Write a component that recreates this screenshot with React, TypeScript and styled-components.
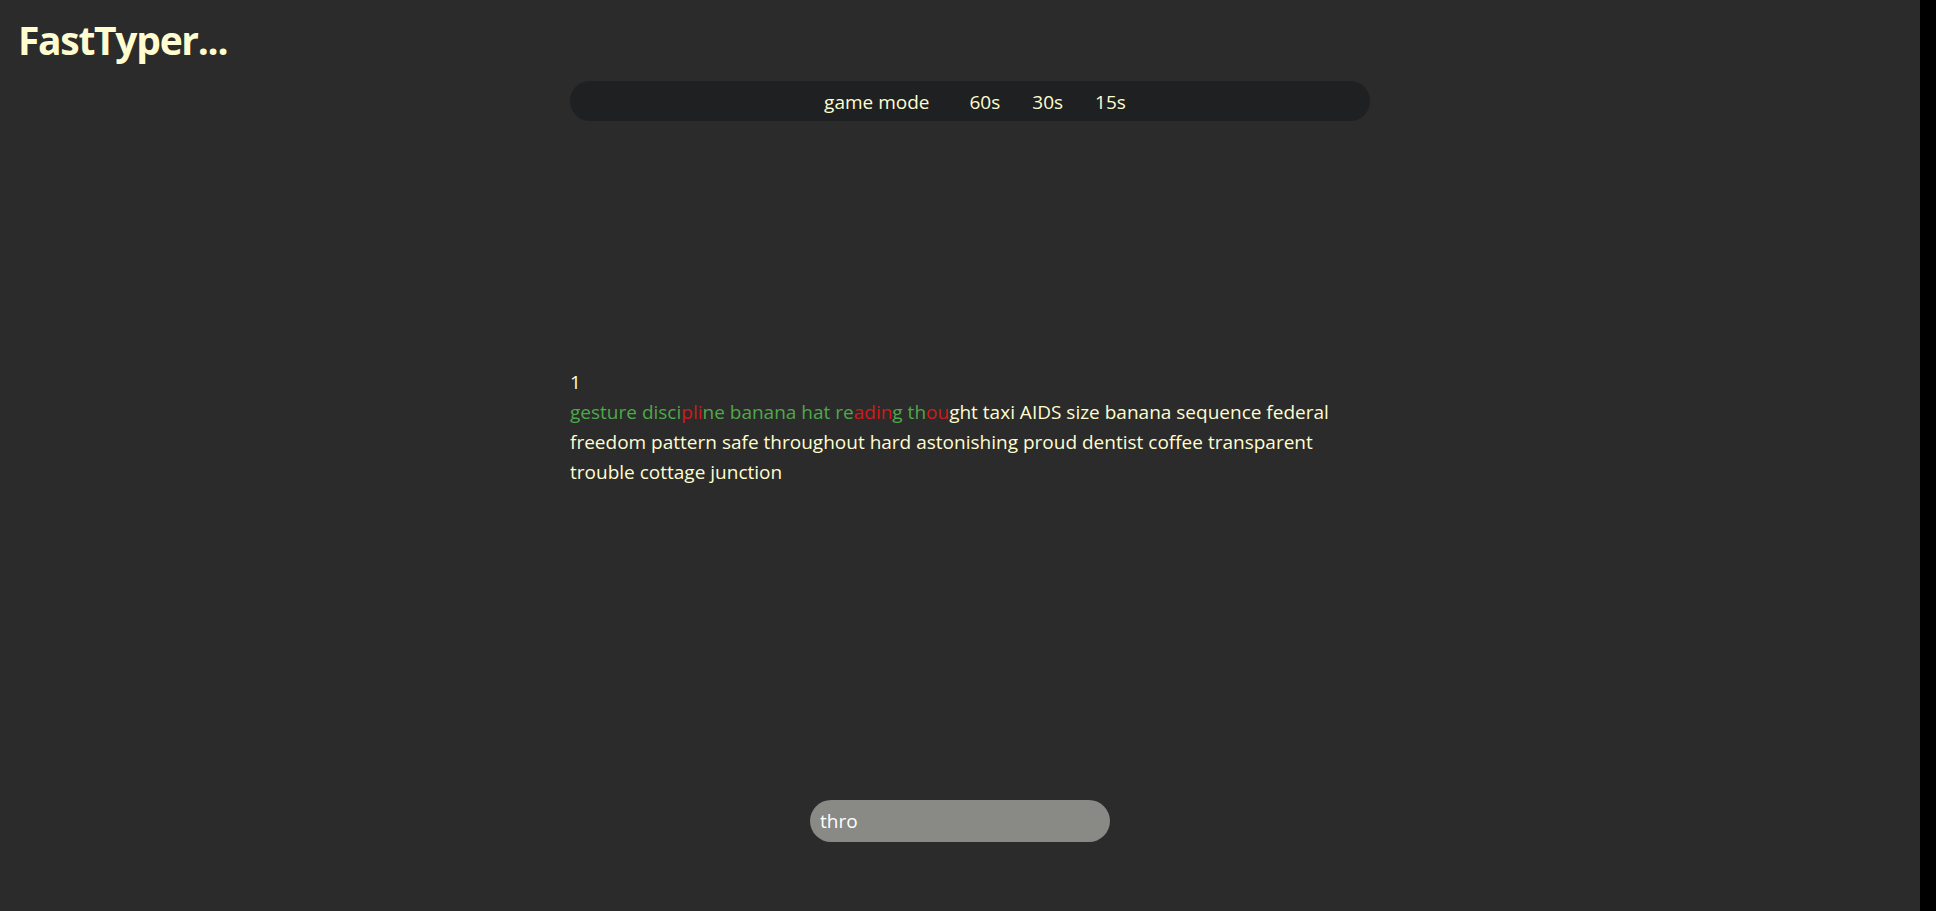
import React, { useState } from 'react';
import styled, { createGlobalStyle } from 'styled-components';

const GlobalStyle = createGlobalStyle`
  html {
    background: #000;
  }
  body {
    margin: 0;
    font-family: "Open Sans", "Noto Sans", sans-serif;
  }
`;

const Page = styled.div`
  width: 1920px;
  min-height: 911px;
  background-color: #2b2b2b;
  color: #fffdd0;
  overflow: hidden;
`;

const Title = styled.h1`
  margin: 0;
  padding: 17px 0 0 18px;
  font-size: 39px;
  line-height: 46px;
  font-weight: 700;
  letter-spacing: -1.3px;
  color: #fffdd0;
`;

const Main = styled.main`
  display: flex;
  flex-direction: column;
  align-items: center;
  padding-left: 20px;
`;

const ModeBar = styled.nav`
  width: 800px;
  height: 40px;
  margin-top: 18px;
  padding-left: 26px;
  padding-top: 1px;
  box-sizing: border-box;
  border-radius: 20px;
  background-color: #1f2022;
  display: flex;
  align-items: center;
  justify-content: center;
  font-size: 19px;
`;

const ModeLabel = styled.span`
  margin-right: 24px;
`;

const ModeOption = styled.button<{ $active?: boolean }>`
  background: none;
  border: none;
  padding: 0 16px;
  font: inherit;
  color: #fffdd0;
  cursor: pointer;
`;

const TextBlock = styled.section`
  width: 800px;
  margin-top: 246px;
  font-size: 19px;
  line-height: 30px;
`;

const Timer = styled.div`
  color: #fffdd0;
`;

const Words = styled.p`
  margin: 0;
`;

const Char = styled.span<{ $state: 'correct' | 'wrong' | 'pending' }>`
  color: ${(p) =>
    p.$state === 'correct' ? '#4fa84a' : p.$state === 'wrong' ? '#d01a1a' : '#fffdd0'};
`;

const TypeInput = styled.input`
  margin-top: 313px;
  margin-left: -20px;
  width: 300px;
  height: 42px;
  box-sizing: border-box;
  border: none;
  outline: none;
  border-radius: 21px;
  background-color: #898985;
  padding: 0 10px;
  font-family: inherit;
  font-size: 19px;
  color: #fff;
`;

const words =
  'gesture discipline banana hat reading thought taxi AIDS size banana sequence federal freedom pattern safe throughout hard astonishing proud dentist coffee transparent trouble cottage junction';

// what was typed so far, against the prompt
const typed = 'gesture discixxxne banana hat rexxxxg thxx';

const App: React.FC = () => {
  const [value, setValue] = useState('thro');

  return (
    <Page>
      <GlobalStyle />
      <Title>FastTyper...</Title>
      <Main>
        <ModeBar>
          <ModeLabel>game mode</ModeLabel>
          <ModeOption>60s</ModeOption>
          <ModeOption>30s</ModeOption>
          <ModeOption>15s</ModeOption>
        </ModeBar>
        <TextBlock>
          <Timer>1</Timer>
          <Words>
            {words.split('').map((ch, i) => {
              const state =
                i >= typed.length ? 'pending' : typed[i] === ch ? 'correct' : 'wrong';
              return (
                <Char key={i} $state={state}>
                  {ch}
                </Char>
              );
            })}
          </Words>
        </TextBlock>
        <TypeInput value={value} onChange={(e) => setValue(e.target.value)} />
      </Main>
    </Page>
  );
};

export default App;
